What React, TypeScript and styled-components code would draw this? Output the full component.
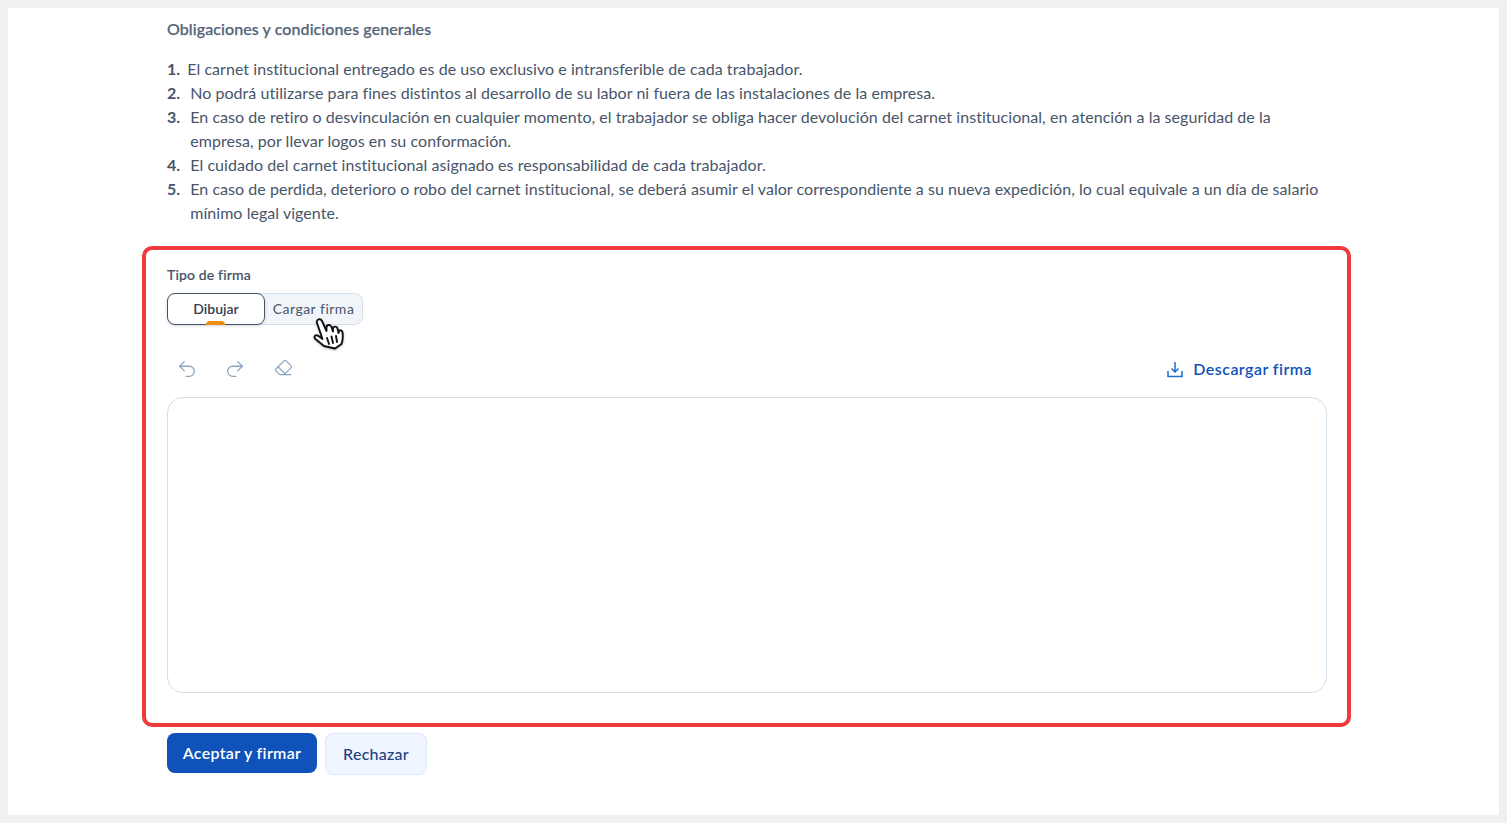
import React from "react";
import styled, { createGlobalStyle } from "styled-components";
import { Undo2, Redo2, Eraser } from "lucide-react";

const Global = createGlobalStyle`
  html, body { margin: 0; padding: 0; background: #f0f0f0; }
  body { font-family: "Lato", "Open Sans", "Liberation Sans", sans-serif; }
`;
const Page = styled.div`
  box-sizing: border-box; width: 1507px; height: 823px; padding: 8px; overflow: hidden;
`;
const Panel = styled.main`
  box-sizing: border-box; width: 1491px; height: 807px; background: #fff;
  padding: 9px 172px 0 159px; color: #475569;
`;
const Title = styled.h2`
  margin: 0; font-size: 16px; line-height: 24px; font-weight: 500; color: #55657a;
  letter-spacing: 0.09px; -webkit-text-stroke: 0.25px #55657a;
`;
const Terms = styled.ol`
  list-style: none; margin: 16px 0 0; padding: 0; font-size: 16px; line-height: 24px;
  letter-spacing: 0.05px;
`;
const Term = styled.li`
  display: flex; gap: ${p => p.$gap}px;
`;
const Num = styled.b`
  font-weight: 700; color: #475569; flex: none;
`;
const Frame = styled.section`
  box-sizing: border-box; margin: 21px -25px 0; width: 1209px; height: 481px;
  border: 4px solid #ef3b3b; border-radius: 10px; padding: 15px 20px 0 21px;
  position: relative;
`;
const Label = styled.div`
  font-size: 14px; line-height: 20px; font-weight: 500; color: #475569;
  letter-spacing: 0.15px; -webkit-text-stroke: 0.2px #475569;
`;
const Tabs = styled.div`
  display: flex; width: 196px; height: 32px; margin-top: 8px; box-sizing: border-box;
  background: #f1f5f9; border: 1px solid #d5dfea; border-radius: 8px;
`;
const ActiveTab = styled.div`
  box-sizing: border-box; width: 98px; height: 32px; margin: -1px 0 0 -1px; background: #fff;
  border: 1px solid #475569; border-radius: 8px; position: relative; padding-bottom: 2px;
  box-shadow: 0 1px 3px rgba(71, 85, 105, 0.25);
  display: flex; align-items: center; justify-content: center;
  font-size: 14px; font-weight: 600; color: #334155;
  &::after { content: ""; position: absolute; bottom: -1px; left: 38px; width: 19px; height: 4px;
    background: #f28c0f; border-radius: 4px 4px 0 0; }
`;
const Tab = styled.div`
  flex: 1; display: flex; align-items: center; justify-content: center;
  font-size: 14px; color: #475569; letter-spacing: 0.5px; padding-bottom: 1px;
`;
const Cursor = styled.svg`
  position: absolute; left: 166px; top: 66px;
  filter: drop-shadow(0 1px 1px rgba(0, 0, 0, 0.25));
`;
const Toolbar = styled.div`
  display: flex; align-items: center; justify-content: space-between;
  height: 32px; margin-top: 28px;
`;
const Tools = styled.div`
  display: flex; gap: 26px; padding-left: 9px; color: #8ea4bf;
`;
const EraserIcon = styled(Eraser)`
  margin-left: 2px;
`;
const DownloadLink = styled.a`
  display: flex; align-items: center; gap: 10px; padding: 0 15px 2px 0;
  color: #0f52ba; font-size: 16px; font-weight: 600; letter-spacing: 0.45px;
`;
const DownloadIcon = styled.svg`
  color: #1a6fd0; margin-top: 2px;
`;
const Canvas = styled.div`
  box-sizing: border-box; height: 296px; margin-top: 12px; width: 1160px;
  border: 1px solid #d3deeb; border-radius: 16px; background: #fff;
`;
const Actions = styled.div`
  display: flex; gap: 8px; margin-top: 6px; align-items: flex-start;
`;
const Primary = styled.button`
  width: 150px; height: 40px; border: 0; border-radius: 8px; background: #0f52ba; color: #fff;
  font: 600 16px "Lato", sans-serif; padding: 0 0 2px; letter-spacing: 0.32px;
`;
const Secondary = styled.button`
  width: 102px; height: 42px; border: 1px solid #dbeafe; border-radius: 8px; background: #eff6ff;
  color: #1e4080; font: 500 16px "Lato", sans-serif; padding: 0 0 2px; letter-spacing: 0.25px;
`;

const terms: [string, number, React.ReactNode][] = [
  ["1.", 7, "El carnet institucional entregado es de uso exclusivo e intransferible de cada trabajador."],
  ["2.", 10, "No podrá utilizarse para fines distintos al desarrollo de su labor ni fuera de las instalaciones de la empresa."],
  ["3.", 10, "En caso de retiro o desvinculación en cualquier momento, el trabajador se obliga hacer devolución del carnet institucional, en atención a la seguridad de la empresa, por llevar logos en su conformación."],
  ["4.", 10, "El cuidado del carnet institucional asignado es responsabilidad de cada trabajador."],
  ["5.", 10, "En caso de perdida, deterioro o robo del carnet institucional, se deberá asumir el valor correspondiente a su nueva expedición, lo cual equivale a un día de salario mínimo legal vigente."],
];

export default function App() {
  return (
    <Page>
      <Global />
      <Panel>
        <Title>Obligaciones y condiciones generales</Title>
        <Terms>
          {terms.map(([n, g, t]) => (
            <Term key={n} $gap={g}><Num>{n}</Num><span>{t}</span></Term>
          ))}
        </Terms>
        <Frame>
          <Label>Tipo de firma</Label>
          <Tabs>
            <ActiveTab>Dibujar</ActiveTab>
            <Tab>Cargar firma</Tab>
          </Tabs>
          <Cursor width="34" height="35" viewBox="0 0 34 35" fill="#fff" stroke="#111" strokeWidth="1.9" strokeLinejoin="round" strokeLinecap="round">
            <path d="M12 30 L3.5 23 C1 20.5 3.5 18 6.5 20 L10.5 23 L5 7 C4 3 8.5 2 10 5 L14.5 15 L14.5 11.5 C14.5 8.5 18.5 8 19.5 11 L21 15.5 L21 12.5 C21 10 25 10 25.5 12.5 L26.5 17 L26.8 15.5 C27.5 13.5 30.5 14 30.5 16.5 C31 20 31 24 29.5 28 L23 32.5 Z" />
            <path d="M15 22 L17 28 M19.5 20.5 L21 27 M24 20 L25 26" />
          </Cursor>
          <Toolbar>
            <Tools>
              <Undo2 size={22} strokeWidth={1.4} />
              <Redo2 size={22} strokeWidth={1.4} />
              <EraserIcon size={19} strokeWidth={1.5} />
            </Tools>
            <DownloadLink>
              <DownloadIcon width="16" height="17" viewBox="0 0 16 17" fill="none" stroke="currentColor" strokeWidth="1.5">
                <path d="M1 10 V15.5 H15 V10" />
                <path d="M8 1 V11 M4.5 7.5 L8 11 L11.5 7.5" />
              </DownloadIcon>
              Descargar firma
            </DownloadLink>
          </Toolbar>
          <Canvas />
        </Frame>
        <Actions>
          <Primary>Aceptar y firmar</Primary>
          <Secondary>Rechazar</Secondary>
        </Actions>
      </Panel>
    </Page>
  );
}
